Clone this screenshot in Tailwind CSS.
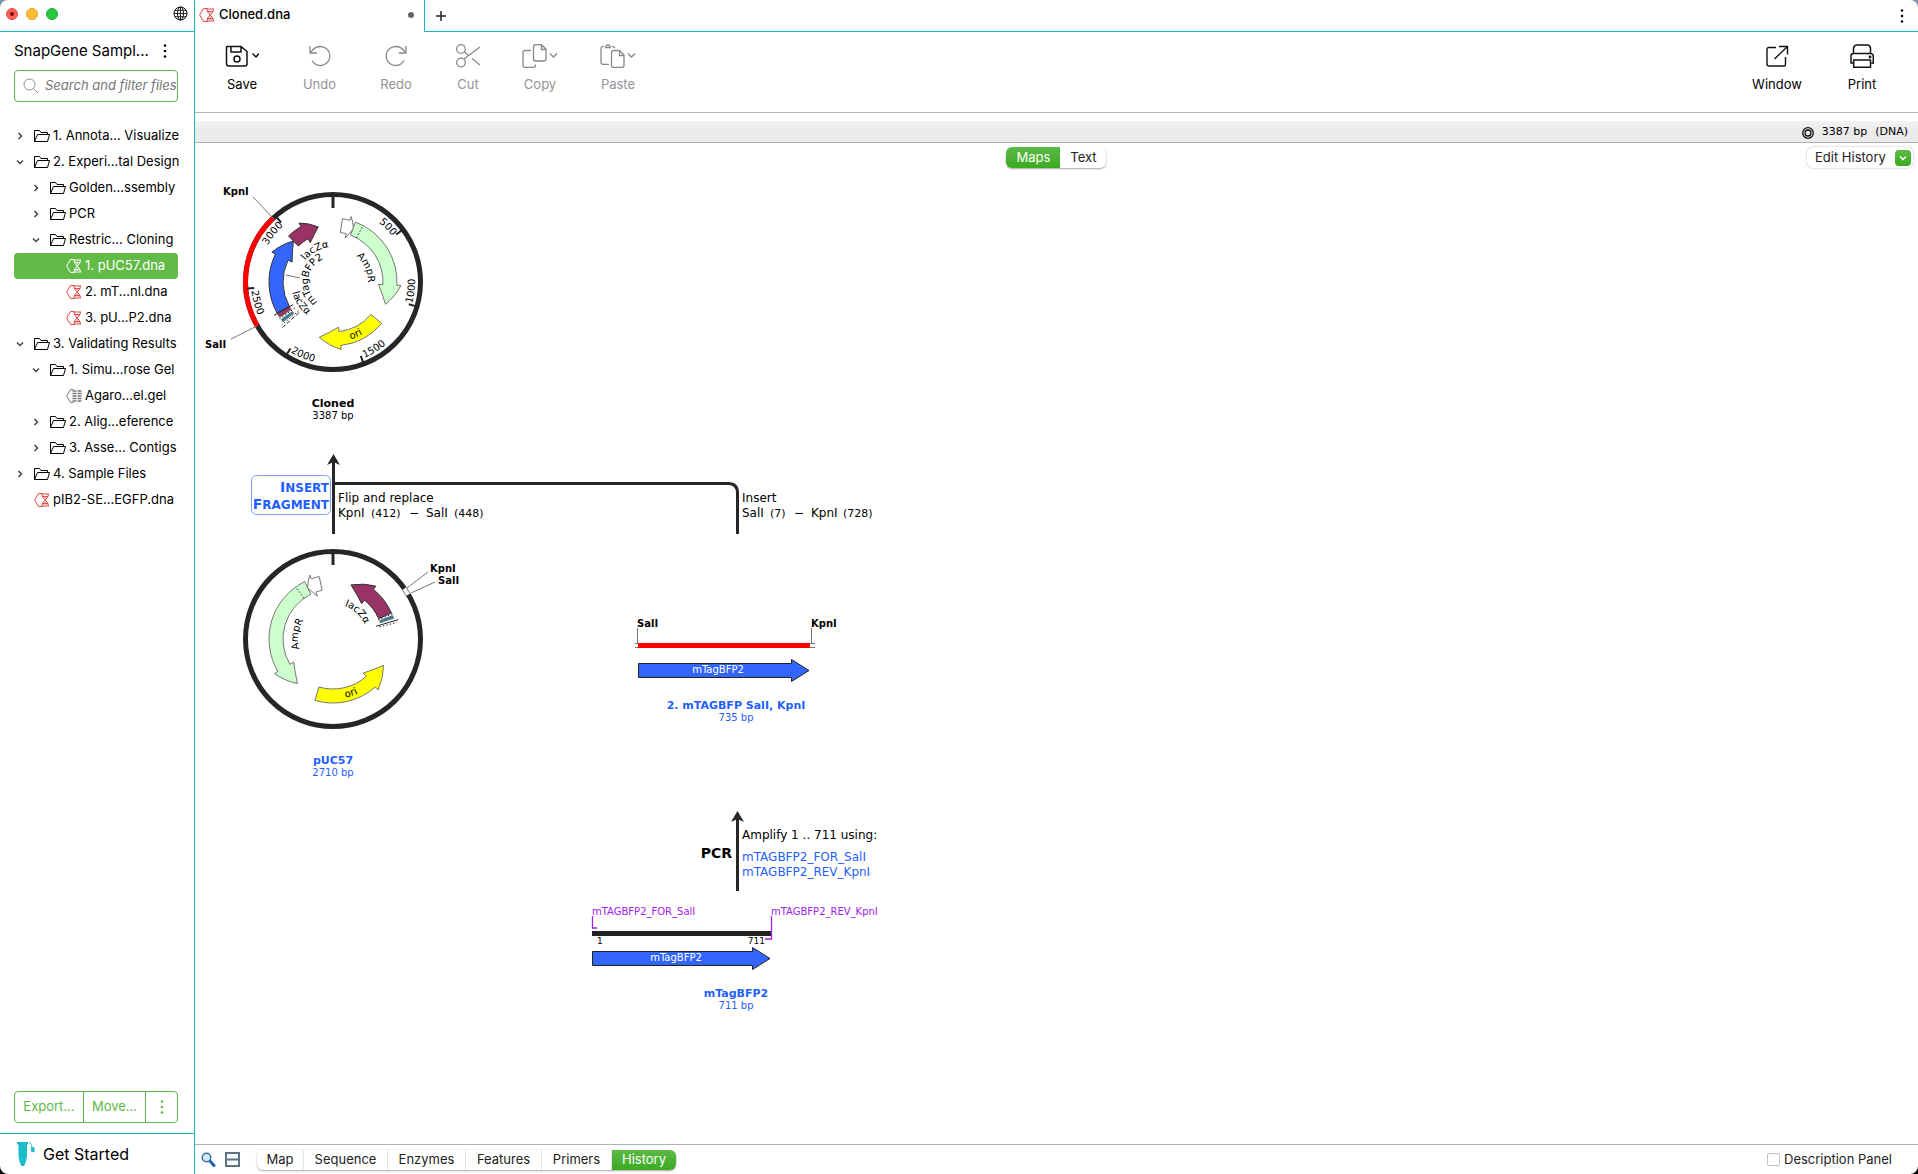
<!DOCTYPE html>
<html lang="en">
<head>
<meta charset="utf-8">
<title>Cloned.dna</title>
<script src="https://cdn.jsdelivr.net/npm/@tailwindcss/browser@4"></script>
</head>
<body class="h-screen bg-linear-to-b from-[#7d93ab] to-black font-['Inter',sans-serif] text-[13px] text-black">

<!-- Shared icons -->
<svg class="hidden" aria-hidden="true">
  <symbol id="folder" viewBox="0 0 16 14"><path d="M.5 12.500V1.500H5.500L7 3.500H13.500V5.500M.5 12.500L3.500 5.500H15.500L13.500 12.500Z" fill="none" stroke="currentColor" stroke-linejoin="round"/></symbol>
  <symbol id="dna" viewBox="0 0 16 16"><path d="M8.500 1.500H4.500L.7 8L4.500 14.500H8.500" fill="none" stroke="currentColor"/><path d="M7.500 2H15M8.500 4.500H14M8.500 11.500H14M7.500 14H15M8 2Q8 5.500 11.200 8T14.500 14M14.500 2Q14.500 5.500 11.200 8T8 14" fill="none" stroke="currentColor"/><path d="M9 4H13.500L11.200 7.500ZM11.200 8.500L14 13H8.500Z" fill="currentColor" opacity=".35"/></symbol>
  <symbol id="gel" viewBox="0 0 16 16"><path d="M7.500 1.500H4.500L.7 8L4.500 14.500H7.500" fill="none" stroke="currentColor"/><path d="M6.500 3H10.500M6.500 5.500H10.500M6.500 8H10.500M6.500 10.500H10.500M6.500 13H10.500M11.500 3H15.500M11.500 5.500H15.500M11.500 8H15.500M11.500 10.500H15.500M11.500 13H15.500" stroke="currentColor" stroke-width="1.500" fill="none"/></symbol>
  <symbol id="right" viewBox="0 0 8 8"><path d="M2.500 1L5.500 4L2.500 7" fill="none" stroke="currentColor" stroke-width="1.500"/></symbol>
  <symbol id="down" viewBox="0 0 8 8"><path d="M1 2.500L4 5.500L7 2.500" fill="none" stroke="currentColor" stroke-width="1.500"/></symbol>
  <symbol id="dots" viewBox="0 0 4 14"><circle cx="2" cy="1.500" r="1.300" fill="currentColor"/><circle cx="2" cy="7" r="1.300" fill="currentColor"/><circle cx="2" cy="12.500" r="1.300" fill="currentColor"/></symbol>
</svg>

<div class="flex h-full overflow-hidden rounded-lg bg-white">

  <!-- Sidebar -->
  <aside class="flex w-[195px] shrink-0 flex-col border-r border-[#1cb5c4]">
    <div class="flex h-8 shrink-0 items-center gap-2 border-b border-[#1cb5c4] pr-1.5 pb-1 pl-1.5">
      <button aria-label="Close" class="grid size-3 place-items-center rounded-full border border-[#e24b41] bg-[#ff5f57]"><span class="size-1 rounded-full bg-[#7a0c06]"></span></button>
      <button aria-label="Minimize" class="size-3 rounded-full border border-[#e0a028] bg-[#febc2e]"></button>
      <button aria-label="Zoom" class="size-3 rounded-full border border-[#1eab33] bg-[#28c840]"></button>
      <button aria-label="Language" class="ml-auto"><svg class="size-[15px]" viewBox="0 0 15 15" fill="none" stroke="#111"><circle cx="7.500" cy="7.500" r="6.500"/><ellipse cx="7.500" cy="7.500" rx="3" ry="6.500"/><path d="M7.500 1V14M1 7.500H14M2 4.300H13M2 10.700H13" stroke-width=".9"/></svg></button>
    </div>
    <div class="mt-[7px] flex h-6 items-center justify-between pr-[27px] pl-3.5">
      <h1 class="text-[15px] whitespace-nowrap">SnapGene Sampl...</h1>
      <button aria-label="Collection menu"><svg class="h-3.5 w-1"><use href="#dots"/></svg></button>
    </div>
    <label class="mx-3.5 mt-[7px] flex h-8 w-[164px] items-center gap-1.5 overflow-hidden rounded border border-[#5cb947] pl-2">
      <svg class="size-4 shrink-0" viewBox="0 0 16 16" fill="none" stroke="#888"><circle cx="6.500" cy="6.500" r="5.500"/><path d="M10.500 10.500L15 15"/></svg>
      <input type="text" aria-label="Search" placeholder="Search and filter files" class="w-full min-w-0 text-[13px] italic outline-none placeholder:text-[#757575]">
    </label>

    <nav class="mt-[21px] text-[13px] whitespace-nowrap" aria-label="Files">
      <button class="flex h-[26px] w-full items-center pl-4"><svg class="size-2 text-[#444]"><use href="#right"/></svg><svg class="ml-2.5 h-3.5 w-4"><use href="#folder"/></svg><span class="ml-[3px]">1. Annota... Visualize</span></button>
      <button class="flex h-[26px] w-full items-center pl-4"><svg class="size-2 text-[#444]"><use href="#down"/></svg><svg class="ml-2.5 h-3.5 w-4"><use href="#folder"/></svg><span class="ml-[3px]">2. Experi...tal Design</span></button>
      <button class="flex h-[26px] w-full items-center pl-8"><svg class="size-2 text-[#444]"><use href="#right"/></svg><svg class="ml-2.5 h-3.5 w-4"><use href="#folder"/></svg><span class="ml-[3px]">Golden...ssembly</span></button>
      <button class="flex h-[26px] w-full items-center pl-8"><svg class="size-2 text-[#444]"><use href="#right"/></svg><svg class="ml-2.5 h-3.5 w-4"><use href="#folder"/></svg><span class="ml-[3px]">PCR</span></button>
      <button class="flex h-[26px] w-full items-center pl-8"><svg class="size-2 text-[#444]"><use href="#down"/></svg><svg class="ml-2.5 h-3.5 w-4"><use href="#folder"/></svg><span class="ml-[3px]">Restric... Cloning</span></button>
      <button class="ml-3.5 flex h-[26px] w-[164px] items-center rounded bg-[#62bb46] pl-[52px] text-white"><svg class="size-4"><use href="#dna"/></svg><span class="ml-[3px]">1. pUC57.dna</span></button>
      <button class="flex h-[26px] w-full items-center pl-[66px]"><svg class="size-4 text-[#e04848]"><use href="#dna"/></svg><span class="ml-[3px]">2. mT...nl.dna</span></button>
      <button class="flex h-[26px] w-full items-center pl-[66px]"><svg class="size-4 text-[#e04848]"><use href="#dna"/></svg><span class="ml-[3px]">3. pU...P2.dna</span></button>
      <button class="flex h-[26px] w-full items-center pl-4"><svg class="size-2 text-[#444]"><use href="#down"/></svg><svg class="ml-2.5 h-3.5 w-4"><use href="#folder"/></svg><span class="ml-[3px]">3. Validating Results</span></button>
      <button class="flex h-[26px] w-full items-center pl-8"><svg class="size-2 text-[#444]"><use href="#down"/></svg><svg class="ml-2.5 h-3.5 w-4"><use href="#folder"/></svg><span class="ml-[3px]">1. Simu...rose Gel</span></button>
      <button class="flex h-[26px] w-full items-center pl-[66px]"><svg class="size-4 text-[#777]"><use href="#gel"/></svg><span class="ml-[3px]">Agaro...el.gel</span></button>
      <button class="flex h-[26px] w-full items-center pl-8"><svg class="size-2 text-[#444]"><use href="#right"/></svg><svg class="ml-2.5 h-3.5 w-4"><use href="#folder"/></svg><span class="ml-[3px]">2. Alig...eference</span></button>
      <button class="flex h-[26px] w-full items-center pl-8"><svg class="size-2 text-[#444]"><use href="#right"/></svg><svg class="ml-2.5 h-3.5 w-4"><use href="#folder"/></svg><span class="ml-[3px]">3. Asse... Contigs</span></button>
      <button class="flex h-[26px] w-full items-center pl-4"><svg class="size-2 text-[#444]"><use href="#right"/></svg><svg class="ml-2.5 h-3.5 w-4"><use href="#folder"/></svg><span class="ml-[3px]">4. Sample Files</span></button>
      <button class="flex h-[26px] w-full items-center pl-[34px]"><svg class="size-4 text-[#e04848]"><use href="#dna"/></svg><span class="ml-[3px]">pIB2-SE...EGFP.dna</span></button>
    </nav>

    <div class="mx-3.5 mt-auto mb-2.5 flex h-8 w-[164px] shrink-0 divide-x divide-[#5cb947] rounded border border-[#5cb947] text-[13px] text-[#5cb947]">
      <button class="w-[69px]">Export...</button>
      <button class="w-[62px]">Move...</button>
      <button aria-label="More" class="grid flex-1 place-items-center"><svg class="h-3.5 w-1"><use href="#dots"/></svg></button>
    </div>
    <button class="flex h-[41px] shrink-0 items-center gap-2 border-t border-[#1cb5c4] pl-[17px] text-base">
      <svg class="h-6 w-[18px]" viewBox="0 0 18 24" fill="#1cbccb"><path d="M0 0H11V2.500H10V14Q9.500 20 7 24H4.500Q2 20 1.500 14V2.500H0Z"/><path d="M12 1L14 2.500V9.500L17.500 10.500V5.500L14.500 4.500V2L12 0Z"/></svg>
      <span>Get Started</span>
    </button>
  </aside>

  <!-- Document -->
  <main class="flex min-w-0 flex-1 flex-col">
    <div class="flex h-8 shrink-0">
      <div class="flex w-[230px] items-center border-r border-[#1cb5c4] pr-2.5 pb-0.5 pl-1">
        <svg class="size-4 text-[#e04848]"><use href="#dna"/></svg>
        <span class="ml-1 font-medium">Cloned.dna</span>
        <span class="ml-auto size-1.5 rounded-full bg-[#666]"></span>
      </div>
      <div class="flex flex-1 items-center justify-between border-b border-[#1cb5c4] pr-3.5 pl-[11px]">
        <button aria-label="New tab"><svg class="size-2.5" viewBox="0 0 10 10" stroke="#222" stroke-width="1.500"><path d="M5 0V10M0 5H10"/></svg></button>
        <button aria-label="Window menu"><svg class="h-3.5 w-1"><use href="#dots"/></svg></button>
      </div>
    </div>

    <div class="flex h-[81px] shrink-0 border-b border-[#b4b4b4] pt-3 pr-[17px] pl-2 text-[#949494]" role="toolbar">
      <button class="flex w-[78px] flex-col items-center gap-[7px] self-start text-black">
        <svg class="h-6 w-[34px]" viewBox="0 0 34 24" fill="none" stroke="#111" stroke-width="1.500"><path d="M2 2.500H16L22 7.500V20Q22 22 20 22H4Q1.500 22 1.500 19.500V3ZM6 2.500V8H16V2.500"/><circle cx="12" cy="15" r="3"/><path d="M27.500 9.500L31 13L34 9.500"/></svg>Save</button>
      <button class="flex w-[77px] flex-col items-center gap-[7px] self-start" disabled>
        <svg class="size-6" viewBox="0 0 24 24" fill="none" stroke="#888" stroke-width="1.300"><path d="M2 2V9H9M3 8Q6.500 2.500 12.500 2.500A9.500 9.500 0 1 1 4 16.500"/></svg>Undo</button>
      <button class="flex w-[76px] flex-col items-center gap-[7px] self-start" disabled>
        <svg class="size-6" viewBox="0 0 24 24" fill="none" stroke="#888" stroke-width="1.300"><path d="M22 2V9H15M21 8Q17.500 2.500 11.500 2.500A9.500 9.500 0 1 0 20 16.500"/></svg>Redo</button>
      <button class="flex w-[68px] flex-col items-center gap-[7px] self-start" disabled>
        <svg class="size-6" viewBox="0 0 24 24" fill="none" stroke="#888" stroke-width="1.300"><circle cx="5" cy="5" r="4.300"/><circle cx="5" cy="18.500" r="4.300"/><path d="M8 15L24 3M8.500 8L12.500 11.500M16 14.500L24 21"/></svg>Cut</button>
      <button class="flex w-[76px] flex-col items-center gap-[7px] self-start" disabled>
        <svg class="h-6 w-9" viewBox="0 0 36 24" fill="none" stroke="#888" stroke-width="1.300"><path d="M9 6.500H3Q1 6.500 1 8.500V21.500Q1 23.300 3 23.300H12Q13.500 23.300 13.500 21V20.500M14 .7H19.500L24 5V15Q24 17 22 17H13.500Q11.500 17 11.500 15V3Q11.500 .7 14 .7ZM19.500 1V5.500H24M28 9.500L31.500 13L35 9.500"/></svg>Copy</button>
      <button class="flex w-[80px] flex-col items-center gap-[7px] self-start" disabled>
        <svg class="h-6 w-9" viewBox="0 0 36 24" fill="none" stroke="#888" stroke-width="1.300"><path d="M4 2.500Q1 2 1 4.500V18Q1 20.300 3 20.300H9M5.500 3.500L7 1H9L10.500 3.500ZM12 2L15 4M14 6.500H19.500L24 11V21.500Q24 23.300 22 23.300H13.500Q11.500 23.300 11.500 21.500V8.500Q11.500 6.500 14 6.500ZM19.500 7V11.500H24M28 9.500L31.500 13L35 9.500"/></svg>Paste</button>
      <button class="ml-auto flex w-[92px] flex-col items-center gap-[7px] self-start text-black">
        <svg class="size-6" viewBox="0 0 24 24" fill="none" stroke="#111" stroke-width="1.400"><path d="M11 3.500H4Q2 3.500 2 5.500V20Q2 22 4 22H19Q20.500 22 20.500 20V13M14 2.500H22.500V10.500M22.500 2.500L9.500 15"/></svg>Window</button>
      <button class="flex w-[78px] flex-col items-center gap-[7px] self-start text-black">
        <svg class="size-6" viewBox="0 0 24 24" fill="none" stroke="#111" stroke-width="1.500"><path d="M3.500 9V4Q4 1 7 1H17.500Q20 1 20.500 4V9M3 19H1V12Q1 9.500 3.500 9.500H21Q23.300 10 23.300 12V19H21.500M3.700 16H20.500V23.200H3.700Z"/><circle cx="20" cy="13" r=".7"/></svg>Print</button>
    </div>

    <div class="shrink-0 border-b border-[#adadad] pt-2">
      <div class="flex h-[21px] items-center justify-end gap-2 bg-linear-to-b from-[#f3f3f3] via-[#eaeaea] to-[#ebebeb] pt-0.5 pr-2.5 font-['DejaVu_Sans',sans-serif] text-[11px]">
        <svg class="size-3" viewBox="0 0 12 12" fill="none" stroke="#111" stroke-width="1.300"><circle cx="6" cy="6" r="5.300"/><circle cx="6" cy="6" r="3"/></svg>
        <span>3387 bp</span><span>(DNA)</span>
      </div>
    </div>

    <div class="grid h-[29px] shrink-0 grid-cols-3 items-start pt-1">
      <span></span>
      <div class="mx-auto flex h-[21px] w-[100px] rounded-md text-[13px] shadow-[0_1px_2px_rgba(0,0,0,0.35)]" role="tablist">
        <button role="tab" aria-selected="true" class="w-[54px] rounded-l-md bg-linear-to-b from-[#5cb947] to-[#3aab1c] text-white">Maps</button>
        <button role="tab" aria-selected="false" class="flex-1 text-[#222]">Text</button>
      </div>
      <button class="mr-[5px] ml-auto flex h-[21px] w-[106px] items-center justify-between rounded-md pr-0.5 pl-2 text-[#222] shadow-[0_0_2px_rgba(0,0,0,0.35)]">Edit History
        <span class="grid size-4 place-items-center rounded bg-linear-to-b from-[#5cb947] to-[#3aab1c] text-white"><svg class="size-2"><use href="#down"/></svg></span>
      </button>
    </div>

    <div class="min-h-0 flex-1 overflow-hidden">
      <!-- History map: plasmids, fragments and the steps joining them -->
      <svg class="h-[860px] w-[725px] font-['DejaVu_Sans',sans-serif] text-[10px]" viewBox="195 172 725 860" role="img" aria-label="Cloning history">
        <defs>
          <path id="cw25" d="M0 25A25 25 0 0 1 0 -25A25 25 0 0 1 0 25"/>
          <path id="cw35" d="M0 35A35 35 0 0 1 0 -35A35 35 0 0 1 0 35"/>
          <path id="cw75" d="M0 75A75 75 0 0 1 0 -75A75 75 0 0 1 0 75"/>
          <path id="ccw42" d="M0 -42A42 42 0 0 0 0 42A42 42 0 0 0 0 -42"/>
          <path id="ccw60" d="M0 -60A60 60 0 0 0 0 60A60 60 0 0 0 0 -60"/>
          <path id="ccw82" d="M0 -82A82 82 0 0 0 0 82A82 82 0 0 0 0 -82"/>
        </defs>

        <g id="cloned" transform="translate(333 282)">
          <circle r="87.500" fill="none" stroke="#262626" stroke-width="5"/>
          <path d="M0 -86V-74" stroke="#262626" stroke-width="3"/>
          <g text-anchor="middle" font-size="10">
            <text><textPath href="#cw75" startOffset="62.500%">500</textPath></text>
            <text><textPath href="#cw75" startOffset="35.800%">3000</textPath></text>
            <text><textPath href="#ccw82" startOffset="73.200%">1000</textPath></text>
            <text><textPath href="#ccw82" startOffset="58.700%">1500</textPath></text>
            <text><textPath href="#ccw82" startOffset="43.800%">2000</textPath></text>
            <text><textPath href="#ccw82" startOffset="29.200%">2500</textPath></text>
            <text><textPath href="#cw35" startOffset="68.500%">AmpR</textPath></text>
            <text><textPath href="#cw35" startOffset="41.800%">lacZα</textPath></text>
            <text><textPath href="#cw25" startOffset="27%">mTagBFP2</textPath></text>
            <text><textPath href="#ccw42" startOffset="34.200%">lacZα</textPath></text>
          </g>
        </g>
        <path d="M253 197L274 219M231 339L257 326M286 275L300 278" stroke="#777" fill="none"/>
        <g font-weight="bold" font-size="10"><text x="223" y="195">KpnI</text><text x="205" y="348">SalI</text></g>
        <g text-anchor="middle"><text x="333" y="407" font-size="11" font-weight="bold">Cloned</text><text x="333" y="419" font-size="10">3387 bp</text></g>

        <!-- Insert fragment step -->
        <path d="M333.500 534V460M333.500 483.500H728Q737.500 483.500 737.500 493V534" fill="none" stroke="#262626" stroke-width="3"/>
        <path d="M333.500 454L340 465L333.500 462L327 465Z" fill="#262626"/>
        <rect x="251.500" y="475.500" width="79" height="39" rx="5" fill="none" stroke="#7d9fff"/>
        <g font-weight="bold" fill="#1f5fff" text-anchor="end" font-size="12"><text x="329" y="492"><tspan font-size="14">I</tspan>NSERT</text><text x="329" y="509"><tspan font-size="14">F</tspan>RAGMENT</text></g>
        <g font-size="12">
          <text x="338" y="502">Flip and replace</text>
          <text x="338" y="517">KpnI <tspan font-size="11" x="371">(412)</tspan><tspan x="409">−</tspan><tspan x="426">SalI</tspan><tspan font-size="11" x="454">(448)</tspan></text>
          <text x="742" y="502">Insert</text>
          <text x="742" y="517">SalI <tspan font-size="11" x="770">(7)</tspan><tspan x="794">−</tspan><tspan x="811">KpnI</tspan><tspan font-size="11" x="843">(728)</tspan></text>
        </g>

        <g id="puc57" transform="translate(333 639)">
          <circle r="87.500" fill="none" stroke="#262626" stroke-width="5"/>
          <path d="M0 -86V-74" stroke="#262626" stroke-width="3"/>
          <g text-anchor="middle" font-size="10">
            <text><textPath href="#cw35" startOffset="27.200%">AmpR</textPath></text>
            <text><textPath href="#cw35" startOffset="61.700%">lacZα</textPath></text>
          </g>
        </g>
        <path d="M407 588L428 572M411 593L435 582" stroke="#777" fill="none"/>
        <g font-weight="bold" font-size="10"><text x="430" y="572">KpnI</text><text x="438" y="584">SalI</text></g>
        <a href="#" text-anchor="middle" fill="#1f5fff"><text x="333" y="764" font-size="11" font-weight="bold">pUC57</text><text x="333" y="776" font-size="10">2710 bp</text></a>

        <!-- Digested fragment -->
        <g font-weight="bold" font-size="10"><text x="637" y="627">SalI</text><text x="811" y="627">KpnI</text></g>
        <path d="M637.500 628V643M811.500 628V643M635 643.500H638M635 647.500H638M810 643.500H815M810 647.500H815" stroke="#777" fill="none"/>
        <path d="M638 643H810V648H638Z" fill="red"/>
        <path d="M638.500 663.500H791.500V659.500L809 670.500L791.500 681.500V677.500H638.500Z" fill="#36f" stroke="#222"/>
        <text x="718" y="673" font-size="10" fill="white" text-anchor="middle">mTagBFP2</text>
        <a href="#" text-anchor="middle" fill="#1f5fff"><text x="736" y="709" font-size="11" font-weight="bold">2. mTAGBFP SalI, KpnI</text><text x="736" y="721" font-size="10">735 bp</text></a>

        <!-- PCR step -->
        <path d="M737.500 891V817" stroke="#262626" stroke-width="3"/>
        <path d="M737.500 811L744 822L737.500 819L731 822Z" fill="#262626"/>
        <text x="732" y="858" font-size="14" font-weight="bold" text-anchor="end">PCR</text>
        <text x="742" y="839" font-size="12">Amplify 1 .. 711 using:</text>
        <a href="#" fill="#1f5fff" font-size="12"><text x="742" y="861">mTAGBFP2_FOR_SalI</text><text x="742" y="876">mTAGBFP2_REV_KpnI</text></a>

        <!-- Template -->
        <g fill="#a020f0" font-size="10"><text x="592" y="915">mTAGBFP2_FOR_SalI</text><text x="771" y="915">mTAGBFP2_REV_KpnI</text></g>
        <path d="M592 931H771V936H592Z" fill="#222"/>
        <path d="M592.500 916V928H597M771.500 916V939H765" fill="none" stroke="#a020f0" stroke-width="1.300"/>
        <text x="597" y="944" font-size="9">1</text><text x="765" y="944" font-size="9" text-anchor="end">711</text>
        <path d="M592.500 951.500H752.500V947.500L770 958.500L752.500 969.500V965.500H592.500Z" fill="#36f" stroke="#222"/>
        <text x="676" y="961" font-size="10" fill="white" text-anchor="middle">mTagBFP2</text>
        <a href="#" text-anchor="middle" fill="#1f5fff"><text x="736" y="997" font-size="11" font-weight="bold">mTagBFP2</text><text x="736" y="1009" font-size="10">711 bp</text></a>
      </svg>
    </div>

    <div class="flex h-[30px] shrink-0 items-center border-t border-[#b0b0b0] pr-[26px] pl-1.5">
      <button aria-label="Find"><svg class="size-[15px]" viewBox="0 0 15 15"><path d="M8.500 8.500L13 13.500" stroke="#1e63ad" stroke-width="3" stroke-linecap="round"/><circle cx="5.500" cy="5.500" r="4.300" fill="#cfe9fb" stroke="#3d6d9e" stroke-width="1.500"/></svg></button>
      <button aria-label="Split view" class="ml-[9px]"><svg class="size-[15px]" viewBox="0 0 15 15" fill="none" stroke="#5d7488" stroke-width="2"><path d="M1 1H14V14H1ZM1 7.500H14"/></svg></button>
      <div class="ml-[17px] flex h-5 divide-x divide-[#e2e2e2] rounded-md text-[13px] text-[#222] shadow-[0_1px_2px_rgba(0,0,0,0.35)]" role="tablist">
        <button role="tab" class="w-[47px]">Map</button>
        <button role="tab" class="w-[84px]">Sequence</button>
        <button role="tab" class="w-[78px]">Enzymes</button>
        <button role="tab" class="w-[76px]">Features</button>
        <button role="tab" class="w-[70px]">Primers</button>
        <button role="tab" aria-selected="true" class="w-[64px] rounded-r-md bg-linear-to-b from-[#5cb947] to-[#3aab1c] text-white">History</button>
      </div>
      <label class="ml-auto flex items-center gap-1 text-[#222]"><input type="checkbox" class="size-[13px] appearance-none rounded-xs border border-[#c4c4c4] bg-white">Description Panel</label>
    </div>
  </main>
</div>

<script>
  // Draws ring features. Angles are degrees clockwise from twelve o'clock.
  const NS = 'http://www.w3.org/2000/svg';
  const pt = (r, a) => [r * Math.sin(a * Math.PI / 180), -r * Math.cos(a * Math.PI / 180)].map(v => v.toFixed(2)).join(' ');
  function path(id, d, attrs) {
    const p = document.createElementNS(NS, 'path');
    p.setAttribute('d', d);
    for (const k in attrs) p.setAttribute(k, attrs[k]);
    document.getElementById(id).append(p);
  }
  function arrow(id, start, base, tip, fill, stroke) {
    const s = tip > start ? 1 : 0;
    path(id, `M${pt(64, start)}A64 64 0 0 ${s} ${pt(64, base)}L${pt(68, base)}Q${pt(64, (base + tip) / 2)} ${pt(57, tip)}Q${pt(50.5, (base + tip) / 2)} ${pt(45.5, base)}L${pt(50, base)}A50 50 0 0 ${1 - s} ${pt(50, start)}Z`, { fill, stroke });
  }
  function band(id, a, b, fill, r1 = 50, r2 = 64) {
    path(id, `M${pt(r2, a)}A${r2} ${r2} 0 0 1 ${pt(r2, b)}L${pt(r1, b)}A${r1} ${r1} 0 0 0 ${pt(r1, a)}Z`, { fill, stroke: '#555', 'stroke-width': 0.7 });
  }
  const ray = (id, a, r1, r2, attrs) => path(id, `M${pt(r1, a)}L${pt(r2, a)}`, { stroke: '#222', ...attrs });
  const dots = { 'stroke-dasharray': '1.500 2' };

  path('cloned', `M${pt(87.5, 240)}A87.5 87.5 0 0 1 ${pt(87.5, 317)}`, { fill: 'none', stroke: 'red', 'stroke-width': 5 });
  [53.1, 106.3, 159.4, 212.6, 265.7, 318.9].forEach(a => ray('cloned', a, 79, 86, { 'stroke-width': 2 }));
  arrow('cloned', 8.5, 15.5, 21, 'white', '#777');
  arrow('cloned', 20.5, 93, 113, '#ccffcc', '#777');
  ray('cloned', 28, 50, 64, dots);
  arrow('cloned', 130.4, 173, 194, '#ffff00', '#777');
  arrow('cloned', 241, 296, 316, '#3366ff', '#333');
  arrow('cloned', 316, 330, 345, '#993366', '#333');
  band('cloned', 236.5, 240, '#993366');
  band('cloned', 231.5, 234, '#31849b');
  ray('cloned', 240.5, 46, 68);
  ray('cloned', 235.5, 46, 66, dots);
  ray('cloned', 230, 45, 67, dots);
  ray('cloned', 228, 46, 68, { 'stroke-dasharray': '4 2' });

  path('puc57', `M${pt(87.5, 54.7)}A87.5 87.5 0 0 1 ${pt(87.5, 59.5)}`, { fill: 'none', stroke: 'white', 'stroke-width': 6 });
  path('puc57', `M${pt(89.5, 54.7)}L${pt(89.5, 59.5)}M${pt(85, 54.7)}L${pt(85, 59.5)}`, { fill: 'none', stroke: '#777' });
  arrow('puc57', 347.5, 340, 333.5, 'white', '#777');
  arrow('puc57', 333.7, 239.5, 218.6, '#ccffcc', '#777');
  ray('puc57', 324.4, 50, 64, dots);
  arrow('puc57', 196.4, 138.5, 117.5, '#ffff00', '#777');
  arrow('puc57', 66, 39, 18.4, '#993366', '#333');
  band('puc57', 68.5, 71, '#31849b');
  ray('puc57', 67, 49, 65, dots);
  ray('puc57', 73.5, 45, 68);
  ray('puc57', 75.5, 48, 66, dots);

  // The ori captions lie on top of their arrows.
  for (const [id, offset] of [['cloned', '56.5%'], ['puc57', '55.1%']]) {
    const t = document.createElementNS(NS, 'text');
    t.setAttribute('font-size', 10);
    t.setAttribute('text-anchor', 'middle');
    t.innerHTML = `<textPath href="#ccw60" startOffset="${offset}">ori</textPath>`;
    document.getElementById(id).append(t);
  }
</script>
</body>
</html>
